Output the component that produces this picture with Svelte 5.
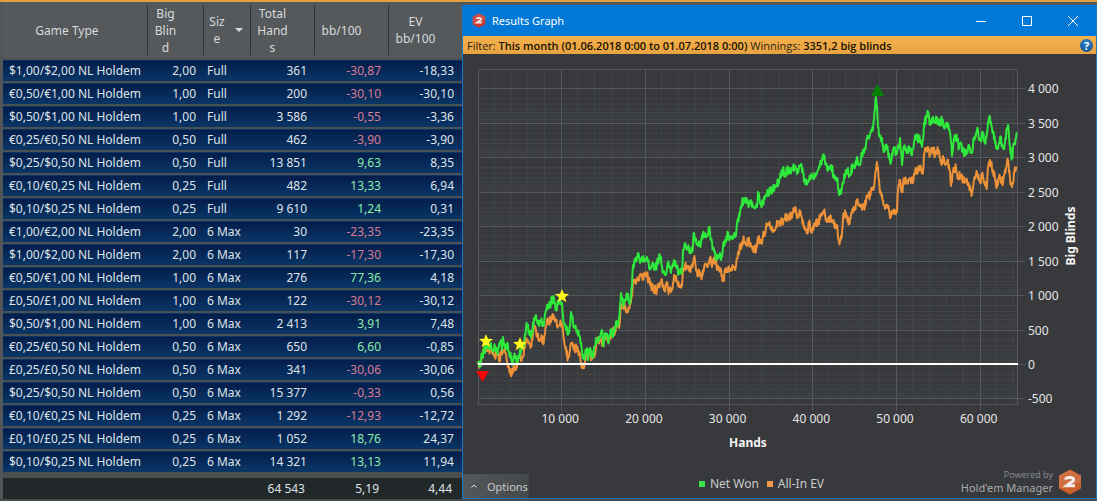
<script>
  const columns = [
    { lines: ["Game Type"], cls: "game" },
    { lines: ["Big", "Blin", "d"], cls: "blind" },
    { lines: ["Siz", "e"], cls: "size", sorted: true },
    { lines: ["Total", "Hand", "s"], cls: "hands" },
    { lines: ["bb/100"], cls: "rate" },
    { lines: ["EV", "bb/100"], cls: "ev" },
  ];

  const rows = [
    ["$1,00/$2,00", "2,00", "Full", "361", "-30,87", "-18,33"],
    ["€0,50/€1,00", "1,00", "Full", "200", "-30,10", "-30,10"],
    ["$0,50/$1,00", "1,00", "Full", "3 586", "-0,55", "-3,36"],
    ["€0,25/€0,50", "0,50", "Full", "462", "-3,90", "-3,90"],
    ["$0,25/$0,50", "0,50", "Full", "13 851", "9,63", "8,35"],
    ["€0,10/€0,25", "0,25", "Full", "482", "13,33", "6,94"],
    ["$0,10/$0,25", "0,25", "Full", "9 610", "1,24", "0,31"],
    ["€1,00/€2,00", "2,00", "6 Max", "30", "-23,35", "-23,35"],
    ["$1,00/$2,00", "2,00", "6 Max", "117", "-17,30", "-17,30"],
    ["€0,50/€1,00", "1,00", "6 Max", "276", "77,36", "4,18"],
    ["£0,50/£1,00", "1,00", "6 Max", "122", "-30,12", "-30,12"],
    ["$0,50/$1,00", "1,00", "6 Max", "2 413", "3,91", "7,48"],
    ["€0,25/€0,50", "0,50", "6 Max", "650", "6,60", "-0,85"],
    ["£0,25/£0,50", "0,50", "6 Max", "341", "-30,06", "-30,06"],
    ["$0,25/$0,50", "0,50", "6 Max", "15 377", "-0,33", "0,56"],
    ["€0,10/€0,25", "0,25", "6 Max", "1 292", "-12,93", "-12,72"],
    ["£0,10/£0,25", "0,25", "6 Max", "1 052", "18,76", "24,37"],
    ["$0,10/$0,25", "0,25", "6 Max", "14 321", "13,13", "11,94"],
  ];

  // chart space: x, y pairs
  const netWon = `478 364 480 366 482 355 484 352 487 343 489 346 491 343 493 350 495 346 497 352 499 345 501 340 502 350 503 337
    505 348 507 345 509 352 511 357 513 362 515 356 517 361 519 355 521 350 524 346 526 328 527 326 530 332 532 334 534 318 536 315
    539 326 541 322 544 325 547 305 549 308 551 302 554 298 556 308 558 302 562 303 563 317 566 330 569 333 571 312 573 322 576 328
    580 337 582 350 584 359 587 348 588 360 590 348 593 357 596 338 598 342 600 337 602 330 603 344 606 334 608 342 611 332 613 337
    616 322 618 326 619 318 621 293 623 303 625 300 628 294 630 304 632 285 633 265 635 262 638 253 640 263 642 257 645 260 648 262
    650 268 653 266 655 270 658 260 661 257 663 273 665 275 668 263 671 273 674 260 677 267 679 274 682 270 683 250 686 245 689 248
    692 252 694 233 695 238 698 245 700 246 703 233 705 235 708 235 709 227 711 240 714 250 716 260 719 255 721 260 723 247 726 242
    728 233 729 240 732 237 736 235 737 223 740 213 742 203 745 198 748 203 752 202 754 207 757 207 758 192 760 203 763 203 767 193
    770 192 773 190 777 185 780 177 782 170 785 173 788 170 792 170 795 166 797 174 800 166 803 173 805 182 808 182 812 175 815 177
    818 170 821 163 824 157 826 163 828 170 831 165 834 175 837 178 838 188 839 195 842 187 844 177 847 170 850 175 853 165 855 168
    857 157 860 165 863 150 864 153 867 138 870 135 873 130 874 120 876 97 877 107 878 127 880 137 882 138 884 152 886 145 888 152
    891 162 893 150 897 153 900 138 902 165 904 147 907 153 909 147 912 155 914 142 917 137 920 140 922 147 923 140 924 123 927 117
    928 112 930 125 932 118 935 123 937 118 939 125 942 119 944 128 947 123 949 130 951 142 952 156 954 138 957 138 959 148 961 143
    963 152 967 153 969 145 972 153 974 138 977 130 980 140 983 133 985 143 987 132 990 117 992 128 995 143 997 149 1000 137
    1003 148 1005 142 1007 128 1008 125 1010 147 1012 158 1014 143 1016 138 1017 133`;

  const allInEv = `478 364 480 365 483 354 486 348 489 350 491 347 494 356 497 354 499 360 503 350 505 352 508 367 511 376 514 366 516 370
    519 358 522 358 524 350 526 338 528 342 531 346 534 327 537 335 540 339 544 340 546 326 548 319 551 322 553 316 556 320 558 326
    561 322 563 330 565 346 568 358 571 343 574 350 577 347 580 355 582 366 585 363 587 352 590 356 594 357 597 342 600 340 603 345
    606 336 609 341 612 330 615 332 617 325 619 328 621 306 623 305 625 308 628 312 631 302 633 283 637 280 640 275 643 278 647 275
    650 285 653 288 657 290 660 283 662 280 664 290 667 282 668 290 672 288 674 275 677 282 679 287 682 286 683 268 687 266 691 268
    694 258 697 272 701 277 704 268 707 267 710 258 712 267 715 258 717 270 720 268 723 281 726 268 729 268 733 266 736 266 738 252
    741 245 744 240 746 245 748 240 752 247 756 252 758 237 761 243 763 236 766 228 770 225 775 230 778 222 782 222 785 217 788 218
    793 213 796 210 797 218 800 212 802 218 804 228 807 232 809 223 812 232 815 223 818 223 821 215 824 212 827 222 831 218 834 223
    837 225 838 238 839 242 842 233 843 218 846 213 849 222 852 212 855 210 857 200 860 205 864 208 867 197 870 195 873 190 875 177
    877 162 879 180 880 193 882 195 884 205 887 205 891 217 893 212 897 212 898 190 900 180 902 192 904 178 907 183 910 178 913 183
    915 173 918 170 921 168 923 173 924 155 926 148 928 147 930 155 933 148 935 155 938 150 940 157 942 163 944 158 947 163 949 165
    951 186 953 172 956 168 958 178 961 175 963 182 967 180 969 185 972 194 974 180 977 173 980 182 982 175 984 183 987 187 988 167
    990 160 993 170 995 180 997 186 1000 177 1003 184 1006 168 1008 160 1010 180 1012 187 1014 173 1017 167`;

  // fills the gaps between samples with small hand-to-hand swings
  function trace(source, seed) {
    const n = source.trim().split(/\s+/).map(Number);
    let d = `M${n[0]} ${n[1]}`;
    let state = seed;
    for (let i = 2; i < n.length; i += 2) {
      const [x0, y0, x1, y1] = n.slice(i - 2, i + 2);
      for (let x = x0 + 0.5; x < x1; x += 0.5) {
        state = (state * 1103515 + 12345) % 2147483;
        const swing = (state / 2147483 - 0.5) * 9;
        d += `L${x} ${(y0 + ((y1 - y0) * (x - x0)) / (x1 - x0) + swing).toFixed(1)}`;
      }
      d += `L${x1} ${y1}`;
    }
    return d;
  }

  const xAt = (hands) => 477.5 + hands * 0.00837;
  const yAt = (blinds) => 364 - blinds * 0.0689;
  const spaced = (n) => String(n).replace(/(\d)(\d{3})$/, "$1 $2");

  const xTicks = [10000, 20000, 30000, 40000, 50000, 60000];
  const yTicks = [4000, 3500, 3000, 2500, 2000, 1500, 1000, 500, 0, -500];
  const xMinor = Array.from({ length: 32 }, (_, i) => (i + 1) * 2000).filter((v) => v % 10000);
  const yMinor = yTicks
    .flatMap((v) => [2, 3, 4, 5, 6, 7, 8, 9].map((k) => yAt(v - 500 * Math.log10(k))))
    .filter((y) => y < 404);
  const stars = [[486, 341], [520, 344], [562, 296]];
  const starPath = "M0 -7L2 -2.3L7 -2L3 1.4L4.4 6.3L0 3.6L-4.4 6.3L-3 1.4L-7 -2L-2 -2.3Z";
</script>

{#snippet badge(cls, fill)}
  <svg class={cls} viewBox="0 0 24 26" aria-hidden="true">
    <path d="M12 0.500L23 6.500V19.500L12 25.500L1 19.500V6.500Z" {fill} />
    <path d="M12 0.500L23 6.500V13L1 19.500V6.500Z" fill="#fff" opacity="0.1" />
    <path
      d="M7.500 10.500Q8 8.500 12 8.500Q15.500 8.500 15.500 10.700Q15.500 12.500 12.500 13.600L8.500 16.800H17"
      fill="none"
      stroke="#f4eeea"
      stroke-width="3"
    />
  </svg>
{/snippet}

<main>
  <section class="report">
    <table>
      <thead>
        <tr>
          {#each columns as col}
            <th class={col.cls}>
              <span class="th-in">
                <span>{#each col.lines as line, i}{#if i}<br />{/if}{line}{/each}</span>
                {#if col.sorted}<i class="sort"></i>{/if}
              </span>
            </th>
          {/each}
        </tr>
      </thead>
      <tbody>
        {#each rows as row}
          <tr>
            <td class="game">{row[0]} NL Holdem</td>
            <td>{row[1]}</td>
            <td class="size">{row[2]}</td>
            <td>{row[3]}</td>
            <td class={row[4].startsWith("-") ? "loss" : "win"}>{row[4]}</td>
            <td>{row[5]}</td>
          </tr>
        {/each}
      </tbody>
      <tfoot>
        <tr class="gap"><td colspan="6"></td></tr>
        <tr class="total">
          <td colspan="3"></td>
          <td>64 543</td>
          <td>5,19</td>
          <td>4,44</td>
        </tr>
      </tfoot>
    </table>
  </section>

  <section class="window">
    <header class="titlebar">
      {@render badge("logo-small", "#c93a31")}
      <h1>Results Graph</h1>
      <div class="controls">
        <button aria-label="Minimize"><svg viewBox="0 0 12 12"><path d="M1 6.500H11" /></svg></button>
        <button aria-label="Maximize"><svg viewBox="0 0 12 12"><path d="M1.500 1.500H10.500V10.500H1.500Z" /></svg></button>
        <button aria-label="Close"><svg viewBox="0 0 12 12"><path d="M1 1L11 11M11 1L1 11" /></svg></button>
      </div>
    </header>

    <div class="filter">
      <p>Filter: <b>This month (01.06.2018 0:00 to 01.07.2018 0:00)</b> Winnings: <b>3351,2 big blinds</b></p>
      <button class="help" aria-label="Help">?</button>
    </div>

    <svg class="chart" viewBox="463 54 633 404" role="img" aria-label="Results Graph">
      <g class="minor">
        {#each xMinor as v}<path d="M{xAt(v)} 70V404" />{/each}
        {#each yMinor as y}<path d="M478 {y}H1017" />{/each}
      </g>
      <g class="major">
        {#each xTicks as v}<path d="M{Math.round(xAt(v)) + 0.5} 69V411" />{/each}
        {#each yTicks as v}<path d="M478 {Math.round(yAt(v)) + 0.5}H1025" />{/each}
        <rect x="478.500" y="69.500" width="539" height="335" />
      </g>
      <path class="line ev-line" d={trace(allInEv, 4021)} />
      <path class="line net-line" d={trace(netWon, 917)} />
      <path class="zero" d="M478 364H1018" />
      <path d="M877.500 84L884 96H871Z" fill="#078007" />
      <path d="M476 371H489L482.500 382Z" fill="#f00808" />
      {#each stars as [x, y]}
        <path d={starPath} transform="translate({x} {y})" fill="#fff61a" />
      {/each}
      {#each xTicks as v}
        <text x={xAt(v) - 1} y="423" text-anchor="middle">{spaced(v)}</text>
      {/each}
      {#each yTicks as v}
        <text x="1028" y={yAt(v) + 5}>{spaced(v)}</text>
      {/each}
      <text class="axis" x="748" y="447" text-anchor="middle">Hands</text>
      <text class="axis" transform="translate(1075 236) rotate(-90)" text-anchor="middle">Big Blinds</text>
    </svg>

    <footer>
      <button class="options">
        <svg viewBox="0 0 6 4"><path d="M0.500 3.500L3 1L5.500 3.500" /></svg>
        Options
      </button>
      <ul class="legend">
        <li><i class="net"></i>Net Won</li>
        <li><i class="ev-key"></i>All-In EV</li>
      </ul>
      <div class="brand">
        <div>
          <p class="powered">Powered by</p>
          <p>Hold'em Manager</p>
        </div>
        {@render badge("logo-large", "#cb5f2c")}
      </div>
    </footer>
  </section>
</main>

<style>
  :global(body) {
    margin: 0;
    background: #45494b;
  }

  main {
    display: grid;
    grid-template-columns: minmax(0, 462fr) minmax(0, 635fr);
    align-items: start;
    border-top: 2px solid #e0a040;
    background: #525658;
    font-family: "Noto Sans", "Open Sans", sans-serif;
    font-size: 12px;
    color: #dfe3e8;
  }

  p,
  h1,
  ul {
    margin: 0;
    padding: 0;
  }

  button {
    border: 0;
    padding: 0;
    background: none;
    color: inherit;
    font: inherit;
  }

  .report {
    padding-left: 3px;
  }

  table {
    width: 100%;
    table-layout: fixed;
    border-collapse: collapse;
  }

  th {
    height: 56px;
    padding: 0;
    background: #55595b;
    font-weight: 400;
    line-height: 17px;
    color: #d8dadc;
  }

  .th-in {
    display: flex;
    align-items: center;
    justify-content: center;
    height: 50px;
    padding: 0 24px 0 4px;
    border-right: 1px solid #303436;
  }

  th.game .th-in {
    padding: 0 20px 0 4px;
  }

  th.size .th-in {
    gap: 10px;
    padding: 0 6px 0 4px;
  }

  th.ev .th-in {
    border-right: 0;
  }

  th.game {
    width: 145px;
  }

  th.blind {
    width: 56px;
  }

  th.size {
    width: 47px;
  }

  th.hands {
    width: 64px;
  }

  th.rate {
    width: 74px;
  }

  th.ev {
    width: 73px;
  }

  .sort {
    flex: none;
    border: 4px solid transparent;
    border-top-color: #d8dadc;
    border-bottom: 0;
  }

  tbody td {
    height: 21px;
    padding: 0 8px 0 0;
    line-height: 21px;
    text-align: right;
    white-space: nowrap;
  }

  tbody tr {
    border-top: 2px solid #4b5053;
    background: linear-gradient(#031d4b, #0a3767);
  }

  td.game {
    padding-left: 6px;
    text-align: left;
  }

  td.size {
    padding-left: 3px;
    text-align: left;
  }

  .loss {
    color: #da7b94;
  }

  .win {
    color: #8deba9;
  }

  .gap td {
    height: 6px;
    padding: 0;
    background: #4b4e4f;
  }

  .total td {
    height: 21px;
    padding: 0 10px 0 0;
    background: #22272a;
    line-height: 21px;
    text-align: right;
  }

  .window {
    margin-top: 3px;
    border: 1px solid #1879c9;
    border-top: 0;
    box-sizing: border-box;
    background: #37393c;
  }

  .titlebar {
    display: flex;
    align-items: center;
    height: 31px;
    padding-left: 9px;
    background: #0078d7;
    color: #fff;
  }

  .logo-small {
    width: 14px;
    height: 15px;
    margin-right: 6px;
  }

  h1 {
    flex: 1;
    font-size: 11px;
    font-weight: 400;
  }

  .controls {
    display: flex;
  }

  .controls button {
    display: grid;
    place-items: center;
    width: 46px;
    height: 31px;
  }

  .controls svg {
    width: 12px;
    height: 12px;
    fill: none;
    stroke: #fff;
  }

  .filter {
    display: flex;
    align-items: center;
    justify-content: space-between;
    height: 18px;
    padding: 0 3px 0 4px;
    background: linear-gradient(#f6b14e, #e7a340);
    font-family: "Open Sans", "Noto Sans", sans-serif;
    font-size: 11px;
    color: #2c2417;
    white-space: nowrap;
  }

  .filter b {
    font-weight: 600;
    color: #161005;
  }

  .help {
    width: 13px;
    height: 13px;
    border-radius: 50%;
    background: radial-gradient(circle at 50% 30%, #2f86cf, #0a4786);
    font-size: 11px;
    font-weight: 700;
    line-height: 13px;
    color: #fff;
  }

  .chart {
    display: block;
    width: 100%;
    height: auto;
  }

  .chart text {
    fill: #e6e6e6;
    font-size: 12px;
  }

  .chart .axis {
    fill: #f4f4f4;
    font-weight: 700;
  }

  .minor path {
    stroke: #424547;
  }

  .major {
    fill: none;
    stroke: #55585a;
  }

  .line {
    fill: none;
    stroke-width: 2;
    stroke-linejoin: round;
  }

  .net-line {
    stroke: #2fe83c;
  }

  .ev-line {
    stroke: #ee923a;
  }

  .zero {
    stroke: #fff;
    stroke-width: 2;
  }

  footer {
    display: grid;
    grid-template-columns: 1fr auto 1fr;
    align-items: end;
    height: 40px;
    font-size: 11px;
    color: #c9cbcc;
  }

  .options {
    display: flex;
    align-items: center;
    gap: 10px;
    width: 66px;
    height: 24px;
    padding-left: 8px;
    background: linear-gradient(90deg, #55585a, #45484a);
  }

  .options svg {
    flex: none;
    width: 6px;
    height: 4px;
    fill: none;
    stroke: #e0e0e0;
  }

  .legend {
    display: flex;
    gap: 8px;
    padding: 0 36px 6px 0;
    font-size: 12px;
    list-style: none;
  }

  .legend li {
    display: flex;
    align-items: center;
    gap: 5px;
    line-height: 16px;
  }

  .legend i {
    width: 6px;
    height: 6px;
    background: #3be04a;
  }

  .legend .ev-key {
    background: #ee9a4a;
  }

  .brand {
    display: flex;
    align-items: center;
    justify-content: flex-end;
    gap: 5px;
    padding: 0 14px 3px 0;
    line-height: 14px;
    text-align: right;
    color: #a9abac;
  }

  .powered {
    font-size: 9px;
    line-height: 12px;
    color: #85888a;
  }

  .logo-large {
    width: 24px;
    height: 26px;
  }
</style>
